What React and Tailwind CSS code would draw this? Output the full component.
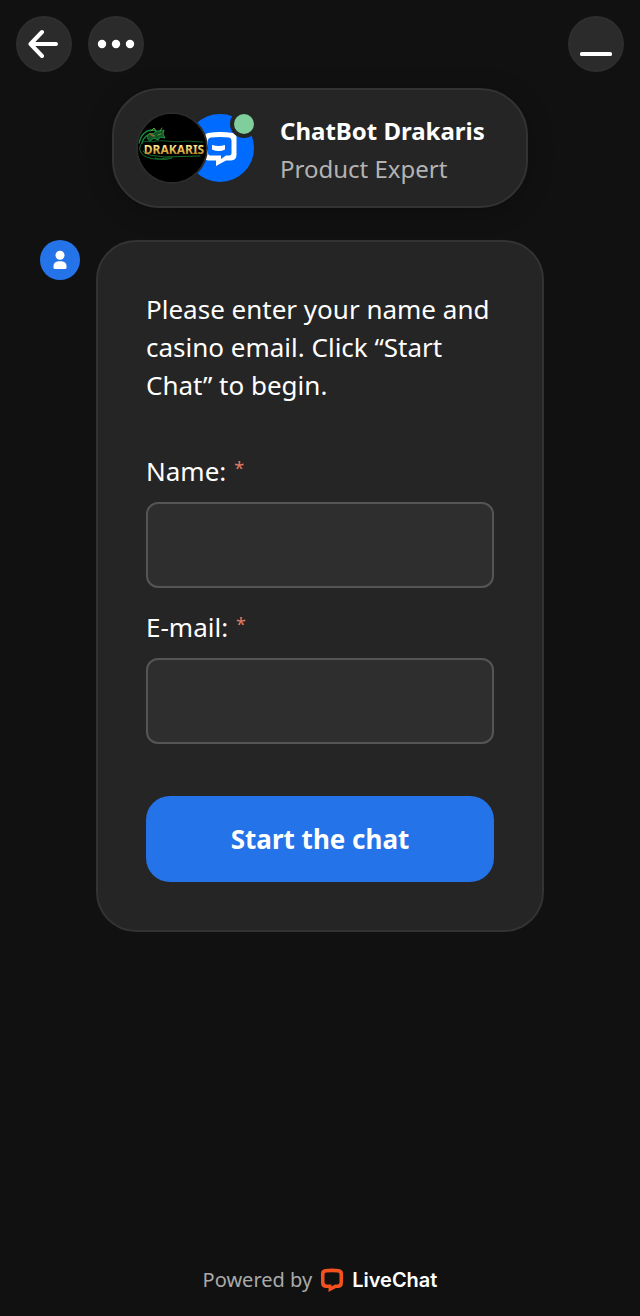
const roundButton =
  "flex size-14 items-center justify-center rounded-full border-2 border-[#2e2e2e] bg-[#2b2b2b] text-white";

function BackIcon() {
  return (
    <svg className="size-8" viewBox="0 0 32 32" fill="none" stroke="currentColor" strokeWidth="4" strokeLinecap="round" strokeLinejoin="round" aria-hidden="true">
      <path d="M28 16H3M14 4L2.500 16L14 28" />
    </svg>
  );
}

function MoreIcon() {
  return (
    <svg className="h-8 w-10 shrink-0" viewBox="0 0 40 32" fill="currentColor" aria-hidden="true">
      <circle cx="6" cy="16" r="4.200" />
      <circle cx="20" cy="16" r="4.200" />
      <circle cx="34" cy="16" r="4.200" />
    </svg>
  );
}

function MinimizeIcon() {
  return (
    <svg className="size-8" viewBox="0 0 32 32" fill="currentColor" aria-hidden="true">
      <rect x="0" y="24" width="32" height="4" rx="1.500" />
    </svg>
  );
}

function DrakarisLogo() {
  return (
    <svg className="size-full" viewBox="0 0 68 68" role="img" aria-label="Drakaris">
      <defs>
        <linearGradient id="gold" gradientUnits="userSpaceOnUse" x1="0" y1="31" x2="0" y2="41">
          <stop offset="0" stopColor="#fff0a0" />
          <stop offset="0.5" stopColor="#e8bd50" />
          <stop offset="1" stopColor="#b07a22" />
        </linearGradient>
      </defs>
      <rect width="68" height="68" fill="#000" />
      <g fill="none" strokeLinecap="round">
        <path d="M1 29C3 21 8 16 15 16C21 17 20 22 15 20C10 19 5 24 4 29" stroke="#178a40" strokeWidth="1.500" />
        <path d="M10 25C8 21 12 18 15 20C20 15 22 18 26 16L25 20L27 24L22 23L20 26L16 24L12 27Z" fill="#125227" stroke="#239344" strokeWidth="1" />
        <path d="M14 21L17 22M20 21L23 20M13 17L16 14L18 17M22 17L24 14" stroke="#55a33c" strokeWidth="1" />
        <path d="M12 20L15 22" stroke="#a45b25" strokeWidth="1.500" />
        <path d="M4 28C8 26 12 29 18 27C28 26 37 29 48 27L65 28" stroke="#105f2c" strokeWidth="1" />
        <path d="M4 29C-1 34 2 42 12 44C22 47 27 43 33 44M5 37C10 43 17 41 26 43L62 42M17 44C23 46 29 46 34 44" stroke="#17702f" strokeWidth="1" />
      </g>
      <text x="36" y="40" textAnchor="middle" className="text-[12px] font-bold [font-family:'Noto_Sans',sans-serif]" fill="url(#gold)">
        DRAKARIS
      </text>
    </svg>
  );
}

function ChatLogo() {
  return (
    <svg className="size-full" viewBox="0 0 68 68" role="img" aria-label="ChatBot">
      <path
        d="M22 19Q34 17 47 19Q50.500 19.500 50.500 23V41Q50.500 46 45 46.500H40L30 52V46.500H22Q18 46 18 41V23Q18 20 22 19Z"
        fill="#fff"
      />
      <path d="M25 23.500Q34 22.500 43 23.500Q45.500 24 45.500 26.500V39Q45.500 41.500 43 41.500H40L35 45V41.500H24.500Q22 41.500 22 39V26.500Q22 24 25 23.500Z" fill="#006cff" />
      <path d="M26 31Q33 33 39 31V35.500Q33 38.500 26 35.500Z" fill="#fff" />
    </svg>
  );
}

function PersonIcon() {
  return (
    <svg className="size-5" viewBox="0 0 20 20" fill="#fff" aria-hidden="true">
      <circle cx="10" cy="5.300" r="4.500" />
      <path d="M3.500 17.500V16C3.500 12.500 6.500 11.200 10 11.200S16.500 12.500 16.500 16V17.500Q16.500 19 15 19H5Q3.500 19 3.500 17.500Z" />
    </svg>
  );
}

function LiveChatIcon() {
  return (
    <svg className="size-6" viewBox="0 0 24 24" fill="#f4511e" fillRule="evenodd" aria-hidden="true">
      <path d="M5 1Q12 .2 19 1Q23 1.500 23 5.500V14.500Q23 19.500 18.500 20H16L8.500 24V20H5.500Q1 19.500 1 14.500V5.500Q1 1.500 5 1ZM6 4.500Q12 4 18 4.500Q19.500 4.800 19.500 6.500V14Q19.500 16.500 17.500 16.500H15L11.500 18.500V16.500H6.500Q4.500 16.500 4.500 14V6.500Q4.500 4.800 6 4.500Z" />
    </svg>
  );
}

function Field({ id, label, type, autoComplete }) {
  return (
    <div className="flex flex-col gap-3">
      <label htmlFor={id} className="flex gap-2 leading-[38px]">
        {label}
        <span className="text-lg leading-8 text-[#e27b66]">*</span>
      </label>
      <input
        id={id}
        name={id}
        type={type}
        autoComplete={autoComplete}
        required
        className="h-[86px] w-full rounded-xl border-2 border-[#555555] bg-[#2e2e2e] px-5 text-white outline-none focus:border-[#2573e8]"
      />
    </div>
  );
}

export default function App() {
  return (
    <div className="flex min-h-screen flex-col bg-[#111111] text-[26px] text-white [font-family:'Noto_Sans',sans-serif]">
      <header className="flex flex-col gap-4 px-4 pt-4">
        <nav className="flex justify-between">
          <div className="flex gap-4">
            <button type="button" aria-label="Back" className={roundButton}>
              <BackIcon />
            </button>
            <button type="button" aria-label="More options" className={roundButton}>
              <MoreIcon />
            </button>
          </div>
          <button type="button" aria-label="Minimize" className={roundButton}>
            <MinimizeIcon />
          </button>
        </nav>
        <section className="mx-auto flex h-[120px] w-full max-w-[416px] items-center gap-6 rounded-[48px] border-2 border-[#333333] bg-[#252525] px-[22px] shadow-[0_4px_24px_rgba(0,0,0,0.25)]">
          <div className="relative flex shrink-0">
            <div className="z-10 size-[72px] overflow-hidden rounded-full border-2 border-[#2b2b2b] bg-black">
              <DrakarisLogo />
            </div>
            <div className="-ml-6 size-[72px] overflow-hidden rounded-full border-2 border-[#252525] bg-[#006cff]">
              <ChatLogo />
            </div>
            <span className="absolute -top-0.5 -right-0.5 z-20 size-7 rounded-full border-4 border-[#252525] bg-[#7fce9b]" />
          </div>
          <div className="whitespace-nowrap pt-1 text-2xl leading-[38px]">
            <h1 className="font-bold">ChatBot Drakaris</h1>
            <p className="text-[#b3b3b3]">Product Expert</p>
          </div>
        </section>
      </header>

      <main className="flex items-start gap-4 px-10 pt-8 pb-8">
        <div className="flex size-10 shrink-0 items-center justify-center rounded-full bg-[#2573e8]">
          <PersonIcon />
        </div>
        <form
          className="mr-14 flex min-w-0 flex-1 flex-col rounded-[40px] border-2 border-[#333333] bg-[#252525] p-12"
          onSubmit={(event) => event.preventDefault()}
        >
          <p className="mb-12 leading-[38px]">
            Please enter your name and casino email. Click “Start Chat” to begin.
          </p>
          <div className="flex flex-col gap-5">
            <Field id="name" label="Name:" type="text" autoComplete="name" />
            <Field id="email" label="E-mail:" type="email" autoComplete="email" />
          </div>
          <button type="submit" className="mt-[52px] h-[86px] rounded-3xl bg-[#2573e8] font-bold">
            Start the chat
          </button>
        </form>
      </main>

      <footer className="mt-auto flex items-center justify-center gap-2 pb-5 text-xl leading-8">
        <span className="text-[#aaaaaa]">Powered by</span>
        <a href="#livechat" className="flex items-center gap-2 font-semibold [font-family:Inter,sans-serif]">
          <LiveChatIcon />
          LiveChat
        </a>
      </footer>
    </div>
  );
}
